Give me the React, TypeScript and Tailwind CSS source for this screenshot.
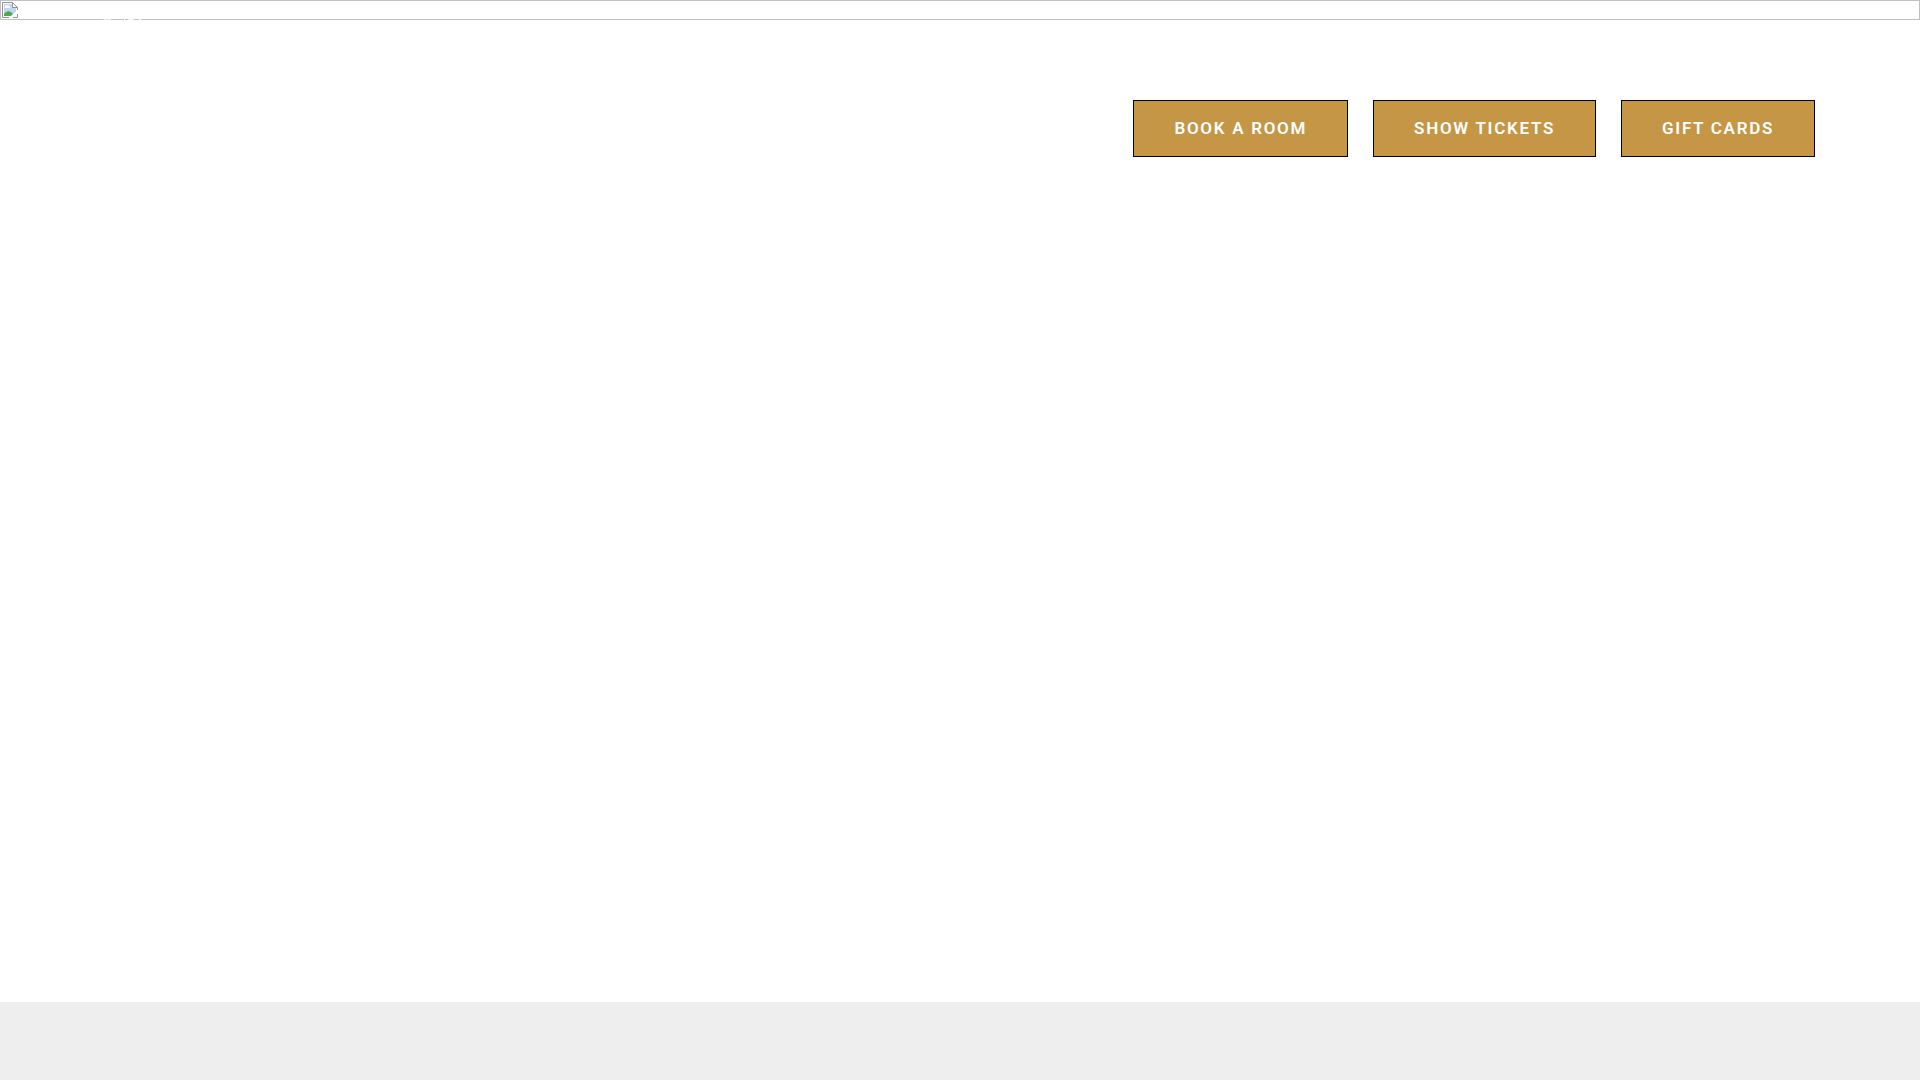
import React from "react";

interface LinkButtonProps {
  href: string;
  label: string;
}

const links: LinkButtonProps[] = [
  { href: "#rooms", label: "Book a room" },
  { href: "#tickets", label: "Show tickets" },
  { href: "#gift-cards", label: "Gift cards" },
];

const LinkButton: React.FC<LinkButtonProps> = ({ href, label }) => {
  return (
    <a
      href={href}
      className="border border-black bg-[#c49645] px-10 py-4 text-[17px] leading-[23px] font-semibold tracking-widest whitespace-nowrap text-white uppercase"
    >
      {label}
    </a>
  );
};

const MissingImageIcon = () => {
  return (
    <svg width="16" height="16" viewBox="0 0 16 16" aria-hidden="true">
      <path d="M.5.5h10l5 5v10H.5z" fill="#fff" />
      <path d="M2 2h8v4h4v4l-6 4H2z" fill="#c3d5f5" />
      <path d="M3 5c0-2 2-2 3-1 1-1 3 0 2 2H3z" fill="#fff" />
      <path d="M2 14v-2c2-3 5-4 8-1l1 1-2 2z" fill="#4caa43" />
      <path d="M7 16 16 8v3l-6 5z" fill="#fff" />
      <path
        d="M7 15.5H.5V.5h10l5 5V8M10.5.5v5h5M15.5 12v3.5H11"
        fill="none"
        stroke="#8e9299"
      />
    </svg>
  );
};

// white crest, only visible where it crosses the banner edge
const Logo = () => {
  return (
    <svg
      className="absolute top-[17px] left-[98px]"
      width="46"
      height="12"
      viewBox="0 0 46 12"
      fill="none"
      stroke="#fff"
      aria-hidden="true"
    >
      <path d="M3 4c2-3 5-4 9-2M23 4l3-3M29 2c4-1 6-1 7 1M38 3l4-2" />
    </svg>
  );
};

export default function App() {
  return (
    <div className="flex min-h-screen flex-col bg-white font-[Roboto,sans-serif]">
      <div className="relative h-5 border border-[#c0c0c0] p-px">
        <MissingImageIcon />
        <Logo />
      </div>
      <header className="flex justify-end px-[105px] pt-20">
        <nav className="flex flex-wrap gap-[25px]">
          {links.map((link) => (
            <LinkButton key={link.href} {...link} />
          ))}
        </nav>
      </header>
      <main className="flex-1" />
      <footer className="h-[78px] bg-[#eeeeee]" />
    </div>
  );
}
